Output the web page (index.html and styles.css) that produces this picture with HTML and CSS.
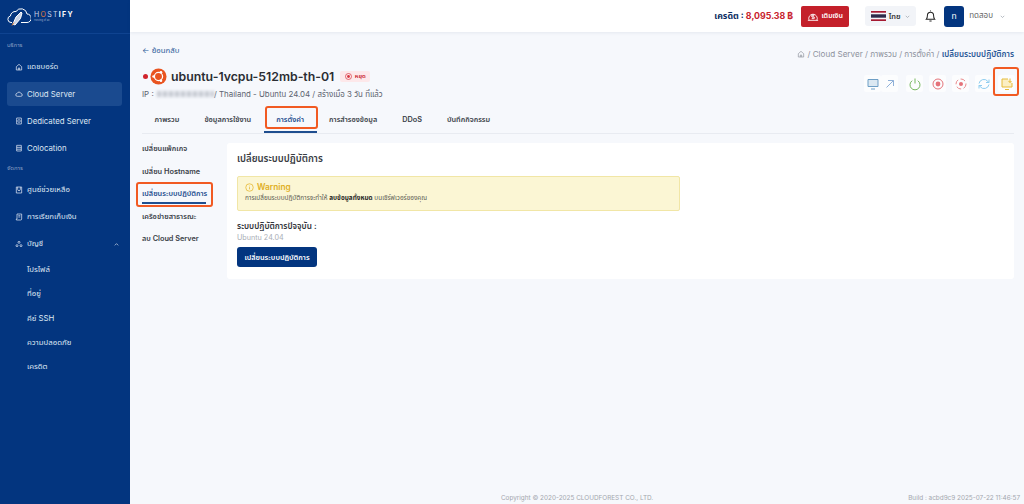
FILE: index.html
```html
<!DOCTYPE html>
<html lang="th">
<head>
<meta charset="utf-8">
<title>Hostify</title>
<link rel="stylesheet" href="styles.css">
</head>
<body>
<div class="app">
  <aside class="sidebar">
    <div class="brand">
      <svg class="brand-logo" viewBox="0 0 24 18" width="24" height="18" fill="none" stroke="#fff" stroke-width="1"><path d="M5 14.5H4a3.3 3.3 0 0 1-.6-6.5A5 5 0 0 1 9 3.5 6 6 0 0 1 20 6a4 4 0 0 1 0 8.500H14"/><path d="M6 16l3-7 5-5 1 1-1.500 5.500L8 17z" fill="#c9d3e6"/><path d="M5 17.500l2-3" stroke="#e8833a"/></svg>
      <div class="brand-text"><span class="brand-name">H<i>O</i>ST<b>IFY</b></span><span class="brand-sub">Hosting of all</span></div>
    </div>
    <div class="nav-label">บริการ</div>
    <a class="nav-item"><svg viewBox="0 0 12 12"><path d="M2 5.500L6 2l4 3.500V10.500H2zM5 10.500V7.500h2v3"/></svg>แดชบอร์ด</a>
    <a class="nav-item active"><svg viewBox="0 0 12 12"><path d="M3.500 9.500a2.200 2.200 0 0 1-.3-4.400 3 3 0 0 1 5.700.2 2.100 2.100 0 0 1-.2 4.200z"/></svg>Cloud Server</a>
    <a class="nav-item"><svg viewBox="0 0 12 12"><path d="M2.500 1.500h7v9h-7zM2.500 6h7M5 3.700h2M5 8.200h2"/></svg>Dedicated Server</a>
    <a class="nav-item"><svg viewBox="0 0 12 12"><path d="M2.500 2h7v8.500h-7zM2.500 5h7M2.500 7.800h7M4 3.500h.1"/></svg>Colocation</a>
    <div class="nav-label second">จัดการ</div>
    <a class="nav-item"><svg viewBox="0 0 12 12"><path d="M2 1.500h8v9H2zM4 1.500v3.500a2 2 0 0 0 4 0V1.500M6 8.500h.1"/></svg>ศูนย์ช่วยเหลือ</a>
    <a class="nav-item"><svg viewBox="0 0 12 12"><path d="M3 1.500h7v7.500a1.500 1.500 0 0 1-1.500 1.500H2V9h1zM5 4h3M5 6h3"/></svg>การเรียกเก็บเงิน</a>
    <a class="nav-item open"><svg viewBox="0 0 12 12"><circle cx="6" cy="3.500" r="1.500"/><circle cx="3" cy="8.500" r="1.500"/><circle cx="9" cy="8.500" r="1.500"/></svg>บัญชี<svg class="caret" viewBox="0 0 12 12"><path d="M3 7.500L6 4.500l3 3"/></svg></a>
    <a class="nav-sub">โปรไฟล์</a>
    <a class="nav-sub">ที่อยู่</a>
    <a class="nav-sub">คีย์ SSH</a>
    <a class="nav-sub">ความปลอดภัย</a>
    <a class="nav-sub">เครดิต</a>
  </aside>

  <div class="main">
    <header class="topbar">
      <div class="credit">เครดิต : <span>8,095.38 ฿</span></div>
      <button class="topup"><svg viewBox="0 0 14 12" width="12" height="11" fill="none" stroke="#fff" stroke-width="1"><path d="M2.500 10.500a5 5 0 1 1 9 0M1 10.500h12M7 3.500v5M8.500 4.500H6.200a1 1 0 0 0 0 2h1.600a1 1 0 0 1 0 2H5.500"/></svg>เติมเงิน</button>
      <div class="lang"><svg class="flag" viewBox="0 0 15 10" width="15" height="10"><rect width="15" height="10" fill="#a51931"/><rect y="1.700" width="15" height="6.600" fill="#f4f5f8"/><rect y="3.300" width="15" height="3.400" fill="#2d2a4a"/></svg>ไทย<svg class="chev" viewBox="0 0 10 10"><path d="M2.500 4l2.500 2.500L7.500 4"/></svg></div>
      <svg class="bell" viewBox="0 0 14 14" width="13" height="14" fill="none" stroke="#222" stroke-width="1.100"><path d="M2.500 10.500c1-1 1.200-2 1.200-4.200a3.300 3.300 0 0 1 6.600 0c0 2.200.2 3.200 1.200 4.200zM5.800 12.500h2.400M7 1v1"/></svg>
      <div class="avatar">ท</div>
      <div class="user">ทดสอบ</div>
      <svg class="chev user-chev" viewBox="0 0 10 10"><path d="M2.500 4l2.500 2.500L7.500 4"/></svg>
    </header>

    <main class="content">
      <div class="crumb-row">
        <a class="back">← ย้อนกลับ</a>
        <nav class="crumbs"><svg viewBox="0 0 12 12" width="8" height="8" fill="none" stroke="#8d929c"><path d="M2 5.500L6 2l4 3.500V10.500H2zM5 10.500V7.500h2v3"/></svg> / Cloud Server / ภาพรวม / การตั้งค่า / <b>เปลี่ยนระบบปฏิบัติการ</b></nav>
      </div>

      <div class="title-row">
        <span class="dot"></span>
        <svg class="ubuntu" viewBox="0 0 18 18" width="17" height="17"><circle cx="9" cy="9" r="8.500" fill="#e95420"/><circle cx="9" cy="9" r="4.300" fill="none" stroke="#fff" stroke-width="1.300"/><circle cx="3.800" cy="9" r="1.400" fill="#fff"/><circle cx="11.600" cy="4.500" r="1.400" fill="#fff"/><circle cx="11.600" cy="13.500" r="1.400" fill="#fff"/></svg>
        <h1>ubuntu-1vcpu-512mb-th-01</h1>
        <span class="status"><svg viewBox="0 0 10 10" width="7" height="7" fill="none" stroke="#d8343f"><circle cx="5" cy="5" r="4.300"/><circle cx="5" cy="5" r="2" fill="#d8343f" stroke="none"/></svg>หยุด</span>
      </div>

      <div class="info-row">
        <div class="meta">IP : <span class="masked"></span>/ Thailand - Ubuntu 24.04 / สร้างเมื่อ 3 วัน ที่แล้ว</div>
        <div class="actions">
          <div class="group">
            <span class="act"><svg viewBox="0 0 14 14" stroke="#6e9fc6"><path d="M2 2.500h10v7H2zM5 12h4" fill="#dbe8f2"/></svg></span>
            <span class="act"><svg viewBox="0 0 14 14" stroke="#8fb0d8"><path d="M3.500 10.500l7-7M5 3.500h5.500V9"/></svg></span>
          </div>
          <span class="act"><svg viewBox="0 0 14 14" stroke="#76b85f"><path d="M4.200 3.700a5 5 0 1 0 5.600 0M7 1.500v5"/></svg></span>
          <span class="act"><svg viewBox="0 0 14 14" stroke="#e5737a"><circle cx="7" cy="7" r="5"/><circle cx="7" cy="7" r="2.400" fill="#e5737a" stroke="none"/></svg></span>
          <span class="act"><svg viewBox="0 0 14 14" stroke="#ea8b8d"><circle cx="7" cy="7" r="5" stroke-dasharray="5 2.500"/><circle cx="7" cy="7" r="2" fill="#e5737a" stroke="none"/></svg></span>
          <span class="act"><svg viewBox="0 0 14 14" stroke="#8ecdf0"><path d="M2 6.500a5 5 0 0 1 8.800-2.200L12 5.500M12 2.500v3H9M12 7.500a5 5 0 0 1-8.800 2.200L2 8.500M2 11.500v-3h3"/></svg></span>
          <span class="act mark"><svg viewBox="0 0 14 14" stroke="#e6bc3a"><path d="M8 2H2v8h10V6M5 12.500h4M10 1.500v4M8.500 4L10 5.500 11.500 4" fill="#fbefc4"/></svg><i class="annot"></i></span>
        </div>
      </div>

      <nav class="tabs">
        <a class="tab">ภาพรวม</a>
        <a class="tab">ข้อมูลการใช้งาน</a>
        <a class="tab current">การตั้งค่า<i class="annot"></i></a>
        <a class="tab">การสำรองข้อมูล</a>
        <a class="tab">DDoS</a>
        <a class="tab">บันทึกกิจกรรม</a>
      </nav>

      <div class="panel-row">
        <nav class="side-tabs">
          <a class="side-tab">เปลี่ยนแพ็กเกจ</a>
          <a class="side-tab">เปลี่ยน Hostname</a>
          <a class="side-tab current">เปลี่ยนระบบปฏิบัติการ<i class="annot"></i></a>
          <a class="side-tab">เครือข่ายสาธารณะ</a>
          <a class="side-tab">ลบ Cloud Server</a>
        </nav>
        <section class="card">
          <h2>เปลี่ยนระบบปฏิบัติการ</h2>
          <div class="warning">
            <div class="warning-title"><svg viewBox="0 0 12 12" width="9" height="9" fill="none" stroke="#e4b52b"><circle cx="6" cy="6" r="5"/><path d="M6 5.500v3M6 3.500v1"/></svg>Warning</div>
            <p>การเปลี่ยนระบบปฏิบัติการจะทำให้ <b>ลบข้อมูลทั้งหมด</b> บนเซิร์ฟเวอร์ของคุณ</p>
          </div>
          <div class="os-label">ระบบปฏิบัติการปัจจุบัน :</div>
          <div class="os-value">Ubuntu 24.04</div>
          <button class="primary">เปลี่ยนระบบปฏิบัติการ</button>
        </section>
      </div>

      <footer class="footer">
        <span class="copy">Copyright © 2020-2025 CLOUDFOREST CO., LTD.</span>
        <span class="build">Build : acbd9c9 2025-07-22 11:46:57</span>
      </footer>
    </main>
  </div>
</div>
</body>
</html>
```
FILE: styles.css
```css
* { box-sizing: border-box; }
html, body { margin: 0; height: 100%; }
body {
  font-family: "Inter", "Noto Sans", "Noto Sans Thai", "Liberation Sans", sans-serif;
  font-size: 8px;
  color: #333;
  background: #f6f8fc;
  overflow: hidden;
}
.app { display: flex; height: 504px; }

.sidebar { width: 130px; flex: none; background: #03357f; color: #dfe7f3; }
.brand {
  height: 34px;
  display: flex;
  align-items: center;
  gap: 3px;
  padding: 0 0 0 7px;
  border-bottom: 1px solid #0f4390;
}
.brand-logo { flex: none; }
.brand-text { display: flex; flex-direction: column; }
.brand-name { font-size: 7px; letter-spacing: 1.300px; color: #c9d3e6; line-height: 8px; }
.brand-name i { font-style: normal; color: #e8833a; }
.brand-name b { color: #fff; }
.brand-sub { font-size: 2.500px; line-height: 3px; color: #9fb0cc; }
.nav-label { font-size: 6px; color: #8aa0c4; height: 10px; line-height: 10px; margin: 6px 0 5px 7px; }
.nav-label.second { margin: 1px 0 5px 7px; }
.nav-item {
  display: flex;
  align-items: center;
  gap: 4px;
  height: 24px;
  margin: 0 8px 3px 7px;
  padding-left: 8px;
  border-radius: 3px;
  font-size: 7.800px;
  color: #dfe7f3;
}
.nav-item svg { width: 8px; height: 8px; fill: none; stroke: #dfe7f3; stroke-width: 1.100; flex: none; }
.nav-item.active { background: #1a4a8f; }
.nav-item .caret { margin-left: auto; margin-right: 2px; width: 7px; height: 7px; }
.nav-item.open { margin-bottom: 1px; }
.nav-sub { display: block; height: 24.300px; line-height: 24px; padding-left: 27px; font-size: 7.800px; color: #dfe7f3; }

.main { flex: 1; min-width: 0; display: flex; flex-direction: column; }
.topbar {
  height: 32px;
  flex: none;
  background: #fff;
  box-shadow: 0 1px 3px rgba(30, 50, 90, .08);
  display: flex;
  align-items: center;
  padding-right: 20px;
  justify-content: flex-end;
}
.credit { font-size: 8.800px; font-weight: 700; color: #0c2e63; margin-right: 8px; white-space: nowrap; }
.credit span { color: #c8232c; }
.topup {
  width: 48px; height: 21px; border: 0; border-radius: 2px; padding: 0;
  background: #c4202a; color: #fff; font: inherit; font-size: 7px; font-weight: 600;
  display: flex; align-items: center; justify-content: center; gap: 2px;
  margin-right: 16px; white-space: nowrap;
}
.topup svg { flex: none; }
.lang {
  width: 51px; height: 20px; border-radius: 3px; background: #f2f4f8;
  display: flex; align-items: center; justify-content: center; gap: 3px;
  font-size: 7.500px; font-weight: 600; color: #333; margin-right: 8px;
}
.chev { width: 7px; height: 7px; fill: none; stroke: #9aa0aa; stroke-width: 1; }
.bell { margin-right: 7px; }
.avatar {
  width: 20px; height: 21px; border-radius: 3px; background: #03357f; color: #fff;
  display: flex; align-items: center; justify-content: center; font-size: 8.500px; margin-right: 5px;
}
.user { font-size: 8px; color: #666; }
.user-chev { margin-left: 6px; margin-right: -2px; }

.content { flex: 1; min-height: 0; padding: 0 10px 0 12px; display: flex; flex-direction: column; }
.crumb-row { display: flex; justify-content: space-between; align-items: center; margin-top: 16px; height: 12px; }
.back { font-size: 7.800px; color: #2c5a98; position: relative; top: -3px; }
.crumbs { font-size: 8.100px; color: #8d929c; }
.crumbs svg { vertical-align: -1px; }
.crumbs b { color: #2c5a98; font-weight: 600; }

.title-row { display: flex; align-items: center; height: 20px; margin-top: 6px; }
.dot { width: 5px; height: 5px; border-radius: 50%; background: #d0242c; margin-left: 1px; margin-right: 2px; }
h1 { margin: 0 0 0 4px; font-size: 12.300px; font-weight: 600; color: #2a2d33; white-space: nowrap; }
.status {
  margin-left: 6px; height: 11px; width: 30px; background: #fde8ea; border-radius: 2px;
  color: #c8232c; font-size: 6px; font-weight: 600;
  display: flex; align-items: center; justify-content: center; gap: 3px;
}

.info-row { display: flex; justify-content: space-between; align-items: flex-start; height: 27px; }
.meta { font-size: 7.900px; color: #5d6470; margin-top: 3px; white-space: nowrap; }
.masked {
  display: inline-block; width: 57px; height: 6px; margin-left: 1px;
  background: repeating-linear-gradient(90deg, #c6cad2 0 4px, #e8eaef 4px 6px);
  filter: blur(1.500px);
}
.actions { display: flex; gap: 6px; margin-top: -11px; margin-right: -1px; }
.group { display: flex; margin-right: 2px; }
.act { width: 17px; height: 17px; background: #fcfdfe; border-radius: 2px; display: flex; align-items: center; justify-content: center; position: relative; }
.act svg { width: 14px; height: 14px; fill: none; stroke-width: 1; }
.annot { position: absolute; border: 2px solid #f15a22; border-radius: 3px; pointer-events: none; }
.act .annot { left: -5px; right: -4px; top: -8px; bottom: -4px; }
.tabs { display: flex; height: 21px; border-bottom: 1px solid #e8ebf1; }
.tab {
  font-size: 7.300px; font-weight: 600; color: #3a3f48; height: 20px; line-height: 14px;
  padding: 0 12.500px; position: relative; text-align: center; white-space: nowrap;
}
.tab.current { color: #1f4e8f; border-bottom: 2px solid #1f4e8f; }
.tab.current .annot { left: 1px; width: 53px; top: -7px; height: 23px; }

.panel-row { display: flex; margin-top: 9px; }
.side-tabs { width: 85px; flex: none; display: flex; flex-direction: column; }
.side-tab { font-size: 7.300px; font-weight: 600; color: #3a3f48; height: 22.500px; line-height: 11px; position: relative; white-space: nowrap; }
.side-tab.current { color: #1f4e8f; }
.side-tab.current::after { content: ""; position: absolute; left: 0; width: 64px; top: 14px; height: 2px; background: #1f4e8f; }
.side-tab .annot { left: -6px; width: 77px; top: -6px; height: 25px; }

.card { flex: 1; min-width: 0; background: #fff; border-radius: 3px; height: 136px; padding: 9px 10px; }
h2 { margin: 0; font-size: 9.600px; font-weight: 600; color: #3a3d44; line-height: 14px; }
.warning {
  margin-top: 10px; width: 443px; height: 35px; background: #fbf6d4; border: 1px solid #f1e6a6; border-radius: 2px;
  padding: 4px 7px;
}
.warning-title { display: flex; align-items: center; gap: 3px; font-size: 8.300px; font-weight: 600; color: #e0af24; line-height: 12px; }
.warning p { margin: 1px 0 0; font-size: 6.400px; color: #5a5a52; line-height: 9px; }
.warning b { color: #2a2a28; }
.os-label { margin-top: 9px; font-size: 8.200px; font-weight: 600; color: #33363c; line-height: 12px; }
.os-value { font-size: 7.200px; color: #a9adb5; line-height: 12px; }
.primary {
  display: block; margin-top: 3px; width: 80px; height: 20px; border: 0; border-radius: 3px;
  background: #03357f; color: #fff; font: inherit; font-size: 7.300px; font-weight: 600; padding: 0;
}
.footer { margin-top: auto; height: 12px; display: flex; justify-content: flex-end; font-size: 6.400px; color: #a3a7ae; line-height: 12px; }
.copy { margin-right: 255px; }
.build { margin-right: -6px; }
```
